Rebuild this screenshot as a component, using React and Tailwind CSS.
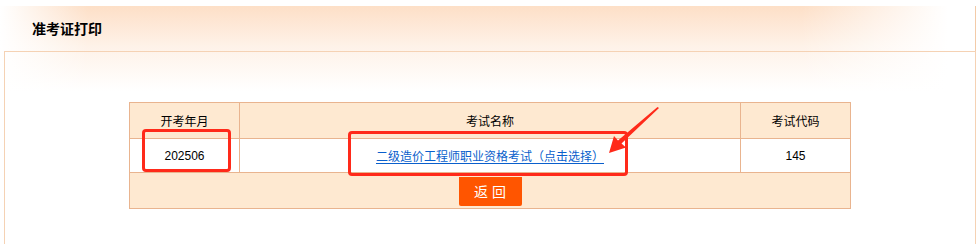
import React from "react";

function Arrow() {
  return (
    <svg className="absolute left-0 top-0 pointer-events-none" width="977" height="244" viewBox="0 0 977 244">
      <polygon
        points="659,108 657.5,107 618,140.5 614,136 609,153 626,147.5 621.5,143.5"
        fill="#ff2a1a"
      />
    </svg>
  );
}

export default function App() {
  return (
    <div className="relative w-[977px] h-[244px] bg-white overflow-hidden font-['Liberation_Sans','Noto_Sans_CJK_SC',sans-serif] text-black">
      <div className="h-[6px] bg-white" />
      <div className="flex flex-col h-[238px] bg-[linear-gradient(to_right,#ffffff_0%,rgba(255,255,255,0)_9%,rgba(255,255,255,0)_82%,#ffffff_97%),linear-gradient(to_bottom,#fddfc7_0px,#fef2e8_40px,#ffffff_85px)]">
        <div className="h-[45px] flex items-center pl-[32px] pr-0 border-r border-[#f3cba8] mr-[1px]">
          <span className="text-[14px] font-bold tracking-[0px] font-['Noto_Sans_CJK_SC',sans-serif]">准考证打印</span>
        </div>
        <div className="flex-1 ml-[4px] mr-[1px] border-t border-l border-r border-[#f5d2b4] pt-[50px]">
          <table className="mx-auto w-[722px] border-collapse border border-[#e9b48f] text-[12px] font-['Noto_Sans_CJK_SC',sans-serif]">
            <tbody>
              <tr className="h-[36px] bg-[#fee9d1]">
                <td className="w-[110px] border border-[#e9b48f] text-center">开考年月</td>
                <td className="border border-[#e9b48f] text-center">考试名称</td>
                <td className="w-[110px] border border-[#e9b48f] text-center">考试代码</td>
              </tr>
              <tr className="h-[34px] bg-white">
                <td className="border border-[#e9b48f] text-center font-['Liberation_Sans',sans-serif] text-[12px]">202506</td>
                <td className="border border-[#e9b48f] text-center">
                  <a href="#" className="text-[#0a5fcc] underline underline-offset-2">二级造价工程师职业资格考试（点击选择）</a>
                </td>
                <td className="border border-[#e9b48f] text-center font-['Liberation_Sans',sans-serif] text-[12px]">145</td>
              </tr>
              <tr className="h-[36px] bg-[#fee9d1]">
                <td colSpan={3} className="border border-[#e9b48f] text-center align-middle">
                  <button className="w-[63px] h-[29px] mt-[1px] bg-[#ff5500] text-white text-[14px] rounded-b-[2px] tracking-[4px] pl-[4px]">返回</button>
                </td>
              </tr>
            </tbody>
          </table>
        </div>
      </div>
      <div className="absolute left-[142px] top-[129px] w-[89px] h-[43px] border-[3px] border-[#ff2a1a] rounded-[4px]" />
      <div className="absolute left-[348px] top-[131px] w-[280px] h-[45px] border-[3px] border-[#ff2a1a] rounded-[4px]" />
      <Arrow />
    </div>
  );
}
